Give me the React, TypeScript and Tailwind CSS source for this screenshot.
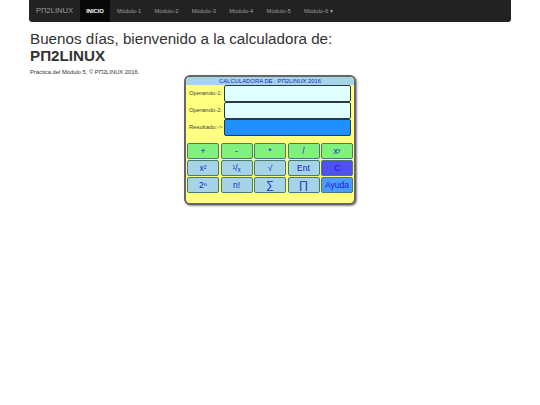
const modules = ["Módulo-1", "Módulo-2", "Módulo-3", "Módulo-4", "Módulo-5"];

const green = "bg-[#80f080]";
const blue = "bg-[#a4d4e6]";

const rows = [
  [
    { t: "+", c: green },
    { t: "-", c: green },
    { t: "*", c: green },
    { t: "/", c: green },
    { t: "xʸ", c: green },
  ],
  [
    { t: "x²", c: blue },
    { t: "¹/ₓ", c: blue },
    { t: "√", c: blue },
    { t: "Ent", c: blue },
    { t: "C", c: "bg-[#5050f0]" },
  ],
  [
    { t: "2ⁿ", c: blue },
    { t: "n!", c: blue },
    { t: "∑", c: `${blue} text-[11px]` },
    { t: "∏", c: `${blue} text-[11px]` },
    { t: "Ayuda", c: "bg-[#4a9cff]" },
  ],
];

function Field({ label, color }: { label: string; color: string }) {
  return (
    <div className="flex h-[17px] items-center">
      <span className="w-[38px] pl-[3px] text-[5.9px] whitespace-nowrap text-[#444]">{label}</span>
      <div className={`h-[17px] w-[127px] rounded-[2px] border border-[#2a3a44] ${color}`} />
    </div>
  );
}

export default function App() {
  return (
    <div className="min-h-[405px] bg-white font-['Liberation_Sans',sans-serif] text-[#333]">
      <div className="mx-[29px]">
        <nav className="flex h-[22px] items-center rounded-b-[3px] bg-[#222] text-[5.8px] text-[#9d9d9d]">
          <span className="w-[51px] pl-[7px] text-[7.6px]">PΠ2LINUX</span>
          <span className="flex h-[22px] w-[30px] items-center justify-center bg-[#080808] font-bold text-white">INICIO</span>
          <div className="ml-[7px] flex gap-[13px]">
            {modules.map((m) => (
              <span key={m} className="w-[24.4px] whitespace-nowrap">
                {m}
              </span>
            ))}
            <span className="whitespace-nowrap">Módulo-6 ▾</span>
          </div>
        </nav>

        <h1 className="mt-[8px] ml-[1px] text-[15.2px] leading-[17px]">
          Buenos días, bienvenido a la calculadora de:
          <br />
          <b>PΠ2LINUX</b>
        </h1>
        <p className="mt-[4px] ml-[1px] text-[5.8px] leading-[8px]">Práctica del Módulo 5, © PΠ2LINUX 2016.</p>

        <div className="mt-[-1px] ml-[155px] w-[172px] overflow-hidden rounded-[6px] border-2 border-[#666] bg-[#ffff80] shadow-[1px_1px_2px_#888]">
          <div className="h-[8px] bg-[#a4d4e6] text-center text-[5.9px] leading-[8px] text-[#1a1ad0]">
            CALCULADORA DE : PΠ2LINUX 2016
          </div>
          <div className="flex flex-col">
            <Field label="Operando-1:" color="bg-[#e0ffff]" />
            <Field label="Operando-2:" color="bg-[#e0ffff]" />
            <Field label="Resultado:->" color="bg-[#1e90ff]" />
          </div>
          <div className="mt-[7px] mb-[10px] flex flex-col gap-[1px] px-[1px]">
            {rows.map((row, i) => (
              <div key={i} className="flex gap-[1.5px]">
                {row.map((b) => (
                  <div
                    key={b.t}
                    className={`flex h-[16px] flex-1 items-center justify-center rounded-[2px] border border-[#4a7a70] text-[8.5px] text-[#1a1ad0] ${b.c}`}
                  >
                    {b.t}
                  </div>
                ))}
              </div>
            ))}
          </div>
        </div>
      </div>
    </div>
  );
}
